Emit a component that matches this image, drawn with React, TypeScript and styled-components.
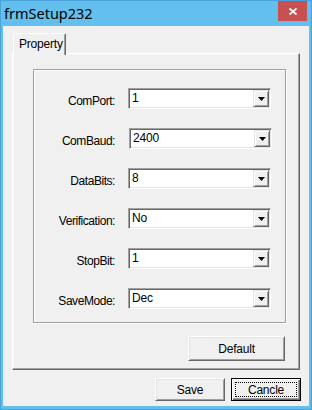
import React from "react";
import styled, { createGlobalStyle } from "styled-components";

const GlobalStyle = createGlobalStyle`
	html, body {
		margin: 0;
		padding: 0;
		background: #ffffff;
	}
	* {
		box-sizing: border-box;
	}
`;

const Frame = styled.div`
	width: 312px;
	height: 410px;
	display: flex;
	flex-direction: column;
	padding: 0 3px 4px 3px;
	background: #63bfee;
	box-shadow: inset 0 0 0 1px #4aa2d9;
	font-family: "Liberation Sans", Arial, sans-serif;
	color: #000;
`;

const TitleBar = styled.div`
	height: 26px;
	display: flex;
	align-items: flex-start;
	justify-content: space-between;
`;

const Title = styled.div`
	font-family: "Noto Sans", "Open Sans", sans-serif;
	font-size: 14.5px;
	line-height: 26px;
	padding-left: 1px;
	color: #000;
`;

const CloseButton = styled.div`
	width: 29px;
	height: 20px;
	margin-top: 1px;
	margin-right: 2px;
	background: #c75050;
	display: flex;
	align-items: center;
	justify-content: center;
`;

const Client = styled.div`
	flex: 1;
	background: #f0f0f0;
	display: flex;
	flex-direction: column;
	padding: 7px 9px 5px 9px;
`;

const TabStrip = styled.div`
	display: flex;
	padding-left: 1px;
	height: 20px;
	position: relative;
	z-index: 1;
`;

const Tab = styled.div`
	width: 53px;
	height: 22px;
	background: #f0f0f0;
	border-top: 1px solid #ffffff;
	border-left: 1px solid #ffffff;
	border-right: 1px solid #696969;
	box-shadow: inset -1px 0 0 #a0a0a0;
	border-radius: 2px 2px 0 0;
	font-size: 12px;
	letter-spacing: -0.2px;
	padding: 3px 0 0 5px;
`;

const Page = styled.div`
	height: 317px;
	display: flex;
	flex-direction: column;
	align-items: flex-end;
	padding: 15px 13px 0 18px;
	border-top: 1px solid #ffffff;
	border-left: 1px solid #ffffff;
	border-right: 1px solid #696969;
	border-bottom: 1px solid #696969;
	box-shadow: inset -1px -1px 0 #a0a0a0, inset 1px 1px 0 #f7f7f7;
`;

const GroupBox = styled.div`
	width: 253px;
	height: 254px;
	border: 1px solid #a0a0a0;
	box-shadow: inset 1px 1px 0 #ffffff, 1px 1px 0 #ffffff;
	padding-top: 18px;
	display: grid;
	grid-template-columns: 81px 143px;
	column-gap: 13px;
	row-gap: 19px;
	grid-auto-rows: 21px;
	align-content: start;
`;

const Label = styled.div`
	font-size: 12px;
	letter-spacing: -0.45px;
	text-align: right;
	line-height: 21px;
	padding-top: 3px;
	color: #000;
`;

const Combo = styled.div<{ $shift?: number }>`
	height: 21px;
	background: #ffffff;
	border-top: 1px solid #a0a0a0;
	border-left: 1px solid #a0a0a0;
	border-right: 1px solid #ffffff;
	border-bottom: 1px solid #ffffff;
	box-shadow: inset 1px 1px 0 #696969, inset -1px -1px 0 #e3e3e3;
	display: flex;
	align-items: stretch;
	padding: 1px;
	margin-left: ${(p) => p.$shift || 0}px;
	width: 143px;
`;

const ComboText = styled.div`
	flex: 1;
	font-size: 12px;
	line-height: 17px;
	padding-left: 2px;
	letter-spacing: -0.2px;
`;

const DropButton = styled.div`
	width: 16px;
	background: #f0f0f0;
	border-top: 1px solid #e3e3e3;
	border-left: 1px solid #e3e3e3;
	border-right: 1px solid #696969;
	border-bottom: 1px solid #696969;
	box-shadow: inset 1px 1px 0 #ffffff, inset -1px -1px 0 #a0a0a0;
	display: flex;
	align-items: center;
	justify-content: center;
`;

const Button = styled.div<{ $width: number; $height: number; $primary?: boolean }>`
	width: ${(p) => p.$width}px;
	height: ${(p) => p.$height}px;
	background: #f0f0f0;
	font-size: 12px;
	letter-spacing: -0.2px;
	display: flex;
	align-items: center;
	justify-content: center;
	border-top: 1px solid ${(p) => (p.$primary ? "#000" : "#ffffff")};
	border-left: 1px solid ${(p) => (p.$primary ? "#000" : "#ffffff")};
	border-right: 1px solid ${(p) => (p.$primary ? "#000" : "#696969")};
	border-bottom: 1px solid ${(p) => (p.$primary ? "#000" : "#696969")};
	box-shadow: ${(p) =>
		p.$primary
			? "inset 1px 1px 0 #ffffff, inset -1px -1px 0 #696969, inset -2px -2px 0 #a0a0a0"
			: "inset 1px 1px 0 #e3e3e3, inset -1px -1px 0 #a0a0a0"};
`;

const DefaultButton = styled(Button)`
	margin-top: 13px;
	margin-right: 1px;
`;

const FocusRing = styled.div`
	width: calc(100% - 8px);
	height: calc(100% - 8px);
	outline: 1px dotted #000;
	display: flex;
	align-items: center;
	justify-content: center;
`;

const ButtonRow = styled.div`
	display: flex;
	justify-content: flex-end;
	gap: 6px;
	margin-top: 8px;
	margin-right: -1px;
`;

const fields: { label: string; value: string; shift?: number }[] = [
	{ label: "ComPort:", value: "1" },
	{ label: "ComBaud:", value: "2400", shift: 1 },
	{ label: "DataBits:", value: "8" },
	{ label: "Verification:", value: "No" },
	{ label: "StopBit:", value: "1" },
	{ label: "SaveMode:", value: "Dec" },
];

const Arrow = () => (
	<svg width='7' height='4' viewBox='0 0 7 4'>
		<polygon points='0,0 7,0 3.5,4' fill='#000' />
	</svg>
);

const App: React.FC = () => {
	return (
		<>
			<GlobalStyle />
			<Frame>
				<TitleBar>
					<Title>frmSetup232</Title>
					<CloseButton>
						<svg width='8' height='7' viewBox='0 0 8 7'>
							<path d='M0.5 0.5 L7.5 6.5 M7.5 0.5 L0.5 6.5' stroke='#fff' strokeWidth='1.8' />
						</svg>
					</CloseButton>
				</TitleBar>
				<Client>
					<TabStrip>
						<Tab>Property</Tab>
					</TabStrip>
					<Page>
						<GroupBox>
							{fields.map((f) => (
								<React.Fragment key={f.label}>
									<Label>{f.label}</Label>
									<Combo $shift={f.shift}>
										<ComboText>{f.value}</ComboText>
										<DropButton>
											<Arrow />
										</DropButton>
									</Combo>
								</React.Fragment>
							))}
						</GroupBox>
						<DefaultButton $width={97} $height={25}>
							Default
						</DefaultButton>
					</Page>
					<ButtonRow>
						<Button $width={70} $height={23}>
							Save
						</Button>
						<Button $width={70} $height={23} $primary>
							<FocusRing>Cancle</FocusRing>
						</Button>
					</ButtonRow>
				</Client>
			</Frame>
		</>
	);
};

export default App;
